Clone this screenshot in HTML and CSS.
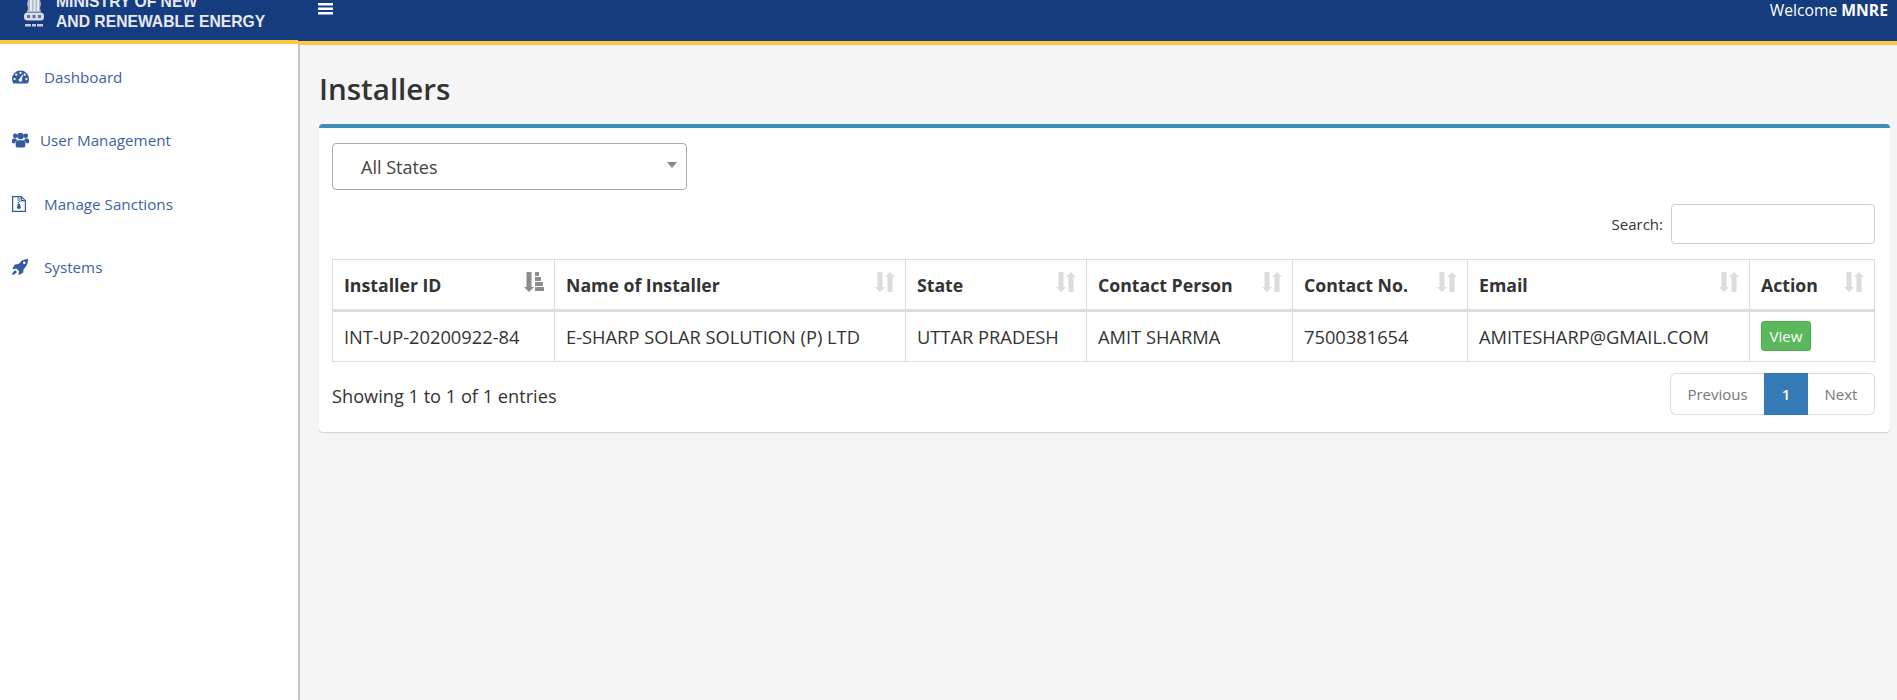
FILE: index.html
```html
<!DOCTYPE html>
<html lang="en">
<head>
    <meta charset="UTF-8">
    <meta name="viewport" content="width=device-width, initial-scale=1.0">
    <title>Installers</title>
    <link rel="stylesheet" href="styles.css">
</head>
<body>
    <header class="topbar">
        <div class="brand">
            <svg class="emblem" viewBox="0 0 22 28" width="22" height="28">
                <path fill="#aeb8cc" d="M5 0h12l1 4-1 4 1 4H4l1-4-1-4z"/>
                <path fill="#e4e7ee" d="M7 0h2v11H7zM10.500 0h2v11h-2zM14 0h2v11h-2z"/>
                <rect x="1" y="12.500" width="20" height="8" rx="3.500" fill="#d8dde8"/>
                <path fill="#5f739d" d="M4 15h3v3H4zM9.500 15h3v3h-3zM15 15h3v3h-3z"/>
                <path fill="#c2cad9" d="M2 24h6v2.500H2zM9 24h4v2.500H9zM14 24h6v2.500h-6z"/>
            </svg>
            <div class="brand-name">MINISTRY OF NEW<br>AND RENEWABLE ENERGY</div>
        </div>
        <div class="topbar-main">
            <svg class="burger" viewBox="0 0 15 12" width="15" height="12">
                <path fill="#fff" d="M0 0h15v2.500H0zM0 4.500h15V7H0zM0 9h15v2.500H0z"/>
            </svg>
            <div class="welcome">Welcome <b>MNRE</b></div>
        </div>
    </header>

    <div class="layout">
        <nav class="sidebar">
            <a class="nav-item" href="#">
                <svg class="nav-icon" viewBox="0 0 18 14">
                    <path fill-rule="evenodd" d="M9 0a9 9 0 0 1 9 9c0 1.800-.5 3.500-1.400 4.900H1.400A9 9 0 0 1 0 9a9 9 0 0 1 9-9zM9 1.500a1.200 1.200 0 1 0 0 2.400 1.200 1.200 0 0 0 0-2.400zM4.500 3.400a1.200 1.200 0 1 0 0 2.400 1.200 1.200 0 0 0 0-2.400zM13.500 3.400a1.200 1.200 0 1 0 0 2.400 1.200 1.200 0 0 0 0-2.400zM2.700 8a1.200 1.200 0 1 0 0 2.400 1.200 1.200 0 0 0 0-2.400zM15.300 8a1.200 1.200 0 1 0 0 2.400 1.200 1.200 0 0 0 0-2.400zM11 4.500L8.300 8.500a1.800 1.800 0 1 0 2 .6l1.600-4.300z"/>
                </svg>
                <span class="nav-text">Dashboard</span>
            </a>
            <a class="nav-item nav-item-tight" href="#">
                <svg class="nav-icon" viewBox="0 0 18 16">
                    <circle cx="3.400" cy="3.500" r="2.400"/>
                    <circle cx="14.600" cy="3.500" r="2.400"/>
                    <circle cx="9" cy="3.800" r="3.500"/>
                    <path d="M0 8.200C0 7 .8 6.300 2 6.300h2.200c.3.800.7 1.400 1.300 1.900C4.200 8.800 3.400 10 3.200 11.500H1c-.6 0-1-.4-1-1zM18 8.200c0-1.200-.8-1.900-2-1.900h-2.200c-.3.800-.7 1.400-1.300 1.900 1.300.6 2.100 1.800 2.300 3.300H17c.6 0 1-.4 1-1zM6.500 8.200h5c1.500 0 2.600 1.200 2.600 3v2.800c0 1.200-.8 2-1.900 2H5.800c-1.100 0-1.900-.8-1.900-2v-2.800c0-1.800 1.100-3 2.600-3z"/>
                </svg>
                <span class="nav-text">User Management</span>
            </a>
            <a class="nav-item" href="#">
                <svg class="nav-icon nav-icon-file" viewBox="0 0 14 16">
                    <path fill="none" stroke="#345ba0" stroke-width="1.200" d="M.6.6h8.700l4.100 4.100v10.700H.6zM9.300.6v4.100h4.100"/>
                    <path d="M5.500 1.200h1.500v1.200H5.500zM7 2.400h1.300v1.200H7zM5.500 3.600h1.500v1.200H5.500zM7 4.800h1.300V6H7zM5.500 6h1.500v1.200H5.500zM5.800 7.800h2.100l1 4.200-2 1.200-2-1.200z"/>
                </svg>
                <span class="nav-text">Manage Sanctions</span>
            </a>
            <a class="nav-item" href="#">
                <svg class="nav-icon nav-icon-rocket" viewBox="0 0 16 16">
                    <path d="M16 0c.1 3.500-.7 6.500-3.300 9l-1 .9-.6 3.700-3.900 2.400-.8-.6.700-3.200-2.700-2.700-3.200.7-.6-.8L2.900 5.500l3.700-.6 1-1C10 1.100 12.500.1 16 0zM12.300 2.500a1.300 1.300 0 1 0 0 2.600 1.300 1.300 0 0 0 0-2.600zM3.200 11.200l1.700 1.700C4 14.500 2 15.500 0 16c.5-2 1.500-4 3.200-4.800z"/>
                </svg>
                <span class="nav-text">Systems</span>
            </a>
        </nav>

        <main class="content">
            <h1 class="page-title">Installers</h1>
            <section class="box">
                <div class="state-select">
                    <span>All States</span>
                    <span class="caret"></span>
                </div>
                <div class="search-row">
                    <label class="search-label" for="search">Search:</label>
                    <input class="search-input" id="search" type="search">
                </div>
                <table class="data-table">
                    <colgroup>
                        <col class="col-id"><col class="col-name"><col class="col-state"><col class="col-person"><col class="col-phone"><col class="col-email"><col class="col-action">
                    </colgroup>
                    <thead>
                        <tr>
                            <th><div class="th-wrap">Installer ID
                                <svg class="sort-icon sort-active" viewBox="0 0 20 20"><path d="M2.500 0h5v15H10l-5 5-5-5h2.500zM11 0h4v4h-4zM11 5h6v4h-6zM11 10h8v4h-8zM11 15h9v4h-9z"/></svg>
                            </div></th>
                            <th><div class="th-wrap">Name of Installer
                                <svg class="sort-icon" viewBox="0 0 20 20"><path d="M2.500 0h5v15H10l-5 5-5-5h2.500zM12.500 20h5V5H20l-5-5-5 5h2.500z"/></svg>
                            </div></th>
                            <th><div class="th-wrap">State
                                <svg class="sort-icon" viewBox="0 0 20 20"><path d="M2.500 0h5v15H10l-5 5-5-5h2.500zM12.500 20h5V5H20l-5-5-5 5h2.500z"/></svg>
                            </div></th>
                            <th><div class="th-wrap">Contact Person
                                <svg class="sort-icon" viewBox="0 0 20 20"><path d="M2.500 0h5v15H10l-5 5-5-5h2.500zM12.500 20h5V5H20l-5-5-5 5h2.500z"/></svg>
                            </div></th>
                            <th><div class="th-wrap">Contact No.
                                <svg class="sort-icon" viewBox="0 0 20 20"><path d="M2.500 0h5v15H10l-5 5-5-5h2.500zM12.500 20h5V5H20l-5-5-5 5h2.500z"/></svg>
                            </div></th>
                            <th><div class="th-wrap">Email
                                <svg class="sort-icon" viewBox="0 0 20 20"><path d="M2.500 0h5v15H10l-5 5-5-5h2.500zM12.500 20h5V5H20l-5-5-5 5h2.500z"/></svg>
                            </div></th>
                            <th><div class="th-wrap">Action
                                <svg class="sort-icon" viewBox="0 0 20 20"><path d="M2.500 0h5v15H10l-5 5-5-5h2.500zM12.500 20h5V5H20l-5-5-5 5h2.500z"/></svg>
                            </div></th>
                        </tr>
                    </thead>
                    <tbody>
                        <tr>
                            <td>INT-UP-20200922-84</td>
                            <td>E-SHARP SOLAR SOLUTION (P) LTD</td>
                            <td>UTTAR PRADESH</td>
                            <td>AMIT SHARMA</td>
                            <td>7500381654</td>
                            <td>AMITESHARP@GMAIL.COM</td>
                            <td><a class="btn-view" href="#">View</a></td>
                        </tr>
                    </tbody>
                </table>
                <div class="table-footer">
                    <div class="entries">Showing 1 to 1 of 1 entries</div>
                    <div class="pager">
                        <a class="page-link page-first" href="#">Previous</a>
                        <a class="page-link page-current" href="#">1</a>
                        <a class="page-link page-last" href="#">Next</a>
                    </div>
                </div>
            </section>
        </main>
    </div>
</body>
</html>
```

FILE: styles.css
```css
* {
    box-sizing: border-box;
}

html, body {
    height: 100%;
}

body {
    margin: 0;
    font-family: "Open Sans", "Noto Sans", sans-serif;
    background-color: #f5f5f5;
    color: #333;
    overflow: hidden;
}

.topbar {
    display: flex;
    height: 45px;
    background: linear-gradient(#163c80 41px, #ffc842 41px);
}

.brand {
    width: 298px;
    height: 44px;
    padding: 0 0 0 23px;
    display: flex;
    align-items: flex-end;
    gap: 11px;
    overflow: hidden;
    background: #163c80;
    border-bottom: 4px solid #ffc842;
}

.emblem {
    flex: none;
    margin-bottom: 12px;
}

.brand-name {
    font-family: "Liberation Sans", Arial, sans-serif;
    font-weight: bold;
    font-size: 15.700px;
    line-height: 20px;
    color: #e6e9f0;
    white-space: nowrap;
    margin-bottom: 8px;
}

.topbar-main {
    flex: 1;
    height: 41px;
    display: flex;
    justify-content: space-between;
    padding: 0 9px 0 20px;
}

.burger {
    margin-top: 3px;
}

.welcome {
    color: #fff;
    font-size: 15.700px;
    line-height: 20px;
}

.layout {
    display: flex;
    height: 655px;
}

.sidebar {
    width: 300px;
    margin-top: -1px;
    padding-top: 1px;
    background: #fff;
    border-right: 2px solid #c6c6c6;
    flex: none;
}

.nav-item {
    display: flex;
    align-items: center;
    height: 63.500px;
    padding-left: 12px;
    color: #3f5fa6;
    font-size: 15.200px;
    text-decoration: none;
}

.nav-icon {
    width: 17px;
    height: 16px;
    fill: #345ba0;
    flex: none;
    margin-right: 15px;
}

.nav-item-tight .nav-icon {
    margin-right: 11px;
}

.nav-icon-file {
    width: 14px;
    margin-right: 18px;
}

.nav-icon-rocket {
    width: 16px;
    margin-right: 16px;
}

.content {
    flex: 1;
    padding: 0 9px 0 19px;
}

.page-title {
    margin: 0;
    height: 79px;
    padding-top: 22px;
    font-size: 29.500px;
    line-height: 44px;
    font-weight: 600;
    color: #333;
}

.box {
    height: 308px;
    padding: 15px 15px 0 13px;
    background: #fff;
    border-top: 4px solid #3c8dbc;
    border-radius: 4px;
    box-shadow: 0 1px 1px rgba(0, 0, 0, 0.15);
}

.state-select {
    width: 355px;
    height: 47px;
    padding: 0 9px 0 28px;
    display: flex;
    align-items: center;
    justify-content: space-between;
    font-size: 18px;
    color: #444;
    border: 1px solid #aaa;
    border-radius: 4px;
}

.caret {
    margin-bottom: 4px;
    border-top: 6px solid #888;
    border-left: 5.500px solid transparent;
    border-right: 5.500px solid transparent;
}

.search-row {
    display: flex;
    justify-content: flex-end;
    align-items: center;
    gap: 8px;
    margin-top: 14px;
    height: 39px;
}

.search-label {
    font-size: 15px;
}

.search-input {
    width: 204px;
    height: 40px;
    border: 1px solid #ccc;
    border-radius: 4px;
}

.data-table {
    width: 1542px;
    margin-top: 16px;
    table-layout: fixed;
    border-collapse: collapse;
    border: 1px solid #ddd;
    font-size: 18.300px;
}

.col-id { width: 222px; }
.col-name { width: 351px; }
.col-state { width: 181px; }
.col-person { width: 206px; }
.col-phone { width: 175px; }
.col-email { width: 282px; }
.col-action { width: 125px; }

.data-table th {
    height: 51px;
    padding: 0 10px 0 11px;
    text-align: left;
    font-size: 17.700px;
    border: 1px solid #ddd;
    border-bottom-width: 3px;
    white-space: nowrap;
}

.th-wrap {
    display: flex;
    align-items: center;
    justify-content: space-between;
}

.sort-icon {
    width: 20px;
    height: 20px;
    margin-top: -5px;
    fill: #dcdcdc;
    flex: none;
}

.sort-active {
    fill: #8c8c8c;
}

.data-table td {
    height: 51px;
    padding: 0 11px;
    border: 1px solid #ddd;
    white-space: nowrap;
}

.btn-view {
    display: inline-block;
    width: 50px;
    text-align: center;
    vertical-align: middle;
    margin-top: -3px;
    line-height: 28px;
    font-size: 15px;
    color: #fff;
    text-decoration: none;
    background: #5cb85c;
    border: 1px solid #4cae4c;
    border-radius: 3px;
}

.table-footer {
    display: flex;
    justify-content: space-between;
    align-items: center;
    margin-top: 11px;
}

.entries {
    padding-top: 4px;
    font-size: 18.200px;
}

.pager {
    display: flex;
    font-size: 15px;
}

.page-link {
    height: 42px;
    display: flex;
    align-items: center;
    justify-content: center;
    color: #777;
    text-decoration: none;
    border: 1px solid #ddd;
}

.page-first {
    width: 94px;
    border-right: 0;
    border-radius: 6px 0 0 6px;
}

.page-last {
    width: 67px;
    border-left: 0;
    border-radius: 0 6px 6px 0;
}

.page-current {
    width: 44px;
    color: #fff;
    font-weight: 600;
    background: #337ab7;
    border-color: #337ab7;
}
```
